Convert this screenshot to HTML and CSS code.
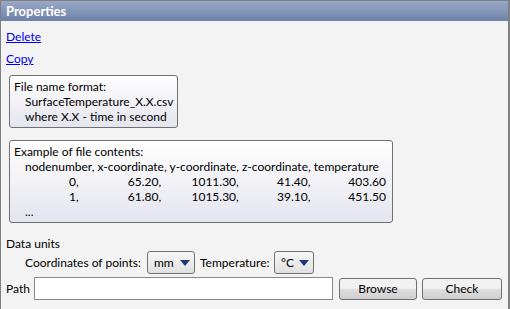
FILE: index.html
```html
<!DOCTYPE html>
<html lang="en">
<head>
  <meta charset="UTF-8">
  <title>Properties</title>
  <link rel="stylesheet" href="styles.css">
</head>
<body>
  <div class="panel">
    <div class="panel-header">Properties</div>

    <div class="panel-body">
      <a class="action" href="#">Delete</a>
      <a class="action" href="#">Copy</a>

      <!-- File name hint -->
      <div class="note">
        File name format:
        <div class="indent">SurfaceTemperature_X.X.csv</div>
        <div class="indent">where X.X - time in second</div>
      </div>

      <!-- Sample file contents -->
      <div class="note note-wide">
        Example of file contents:
        <div class="indent">nodenumber, x-coordinate, y-coordinate, z-coordinate, temperature</div>
        <div class="sample-row">
          <span class="c1">0,</span><span class="c2">65.20,</span><span class="c3">1011.30,</span><span class="c4">41.40,</span><span class="c5">403.60</span>
        </div>
        <div class="sample-row">
          <span class="c1">1,</span><span class="c2">61.80,</span><span class="c3">1015.30,</span><span class="c4">39.10,</span><span class="c5">451.50</span>
        </div>
        <div class="indent">...</div>
      </div>

      <div class="section-title">Data units</div>
      <div class="units-row">
        <span class="coords-label">Coordinates of points:</span>
        <span class="select select-mm">mm <span class="arrow"></span></span>
        <span class="temp-label">Temperature:</span>
        <span class="select">&deg;C <span class="arrow"></span></span>
      </div>

      <div class="path-row">
        <span class="path-label">Path</span>
        <input type="text" class="path-input">
        <button class="btn">Browse</button>
        <button class="btn btn-check">Check</button>
      </div>
    </div>
  </div>
</body>
</html>
```

FILE: styles.css
```css
:root {
  --bg-panel: #f3f3f3;
  --frame: #7f7f7f;
  --text: #000000;
  --link: #0000ee;
  --ctrl-border: #707070;
}
body {
  margin: 0;
  font-family: Lato, "Open Sans", sans-serif;
  font-size: 12px;
  color: var(--text);
}
/* Panel frame */
.panel {
  width: 507px;
  height: 308px;
  border: 1px solid var(--frame);
  border-right-width: 2px;
  border-bottom: none;
  background: var(--bg-panel);
  overflow: hidden;
}
.panel-header {
  height: 20px;
  line-height: 20px;
  padding-left: 5px;
  color: #ffffff;
  font-size: 13px;
  font-weight: bold;
  background: linear-gradient(#9aa8c8, #6d82aa);
}
.panel-body {
  padding: 8px 0 0 5px;
  display: flex;
  flex-direction: column;
  align-items: flex-start;
}
.action {
  color: var(--link);
  line-height: 15px;
  margin-bottom: 7px;
}
/* Hint boxes */
.note {
  width: 157px;
  margin: 2px 0 0 3px;
  padding: 3px 6px 3px 4px;
  line-height: 15px;
  white-space: nowrap;
  border: 1px solid var(--ctrl-border);
  border-radius: 3px;
  background: linear-gradient(#ffffff, #e4e4ee);
}
.note-wide {
  margin-top: 12px;
  width: 372px;
}
.indent {
  padding-left: 11px;
}
.sample-row {
  display: flex;
}
.sample-row span {
  text-align: right;
}
.c1 { width: 65px; }
.c2 { width: 83px; }
.c3 { width: 78px; }
.c4 { width: 72px; }
.c5 { width: 76px; }
/* Units */
.section-title {
  margin-top: 13px;
  line-height: 15px;
}
.units-row {
  display: flex;
  align-items: center;
  margin-left: 19px;
}
.coords-label {
  width: 122px;
}
.temp-label {
  width: 74px;
  margin-left: 5px;
}
.select {
  display: inline-flex;
  align-items: center;
  justify-content: space-between;
  box-sizing: border-box;
  width: 40px;
  height: 23px;
  padding: 0 4px 0 6px;
  border: 1px solid var(--ctrl-border);
  border-radius: 3px;
  background: linear-gradient(#f7f7f7, #e0e0e0);
}
.select-mm {
  width: 48px;
}
.arrow {
  width: 0;
  height: 0;
  border-left: 5px solid transparent;
  border-right: 5px solid transparent;
  border-top: 6px solid #1d3a78;
}
/* Path row */
.path-row {
  display: flex;
  align-items: center;
  margin-top: 3px;
}
.path-label {
  width: 28px;
}
.path-input {
  box-sizing: border-box;
  width: 299px;
  height: 23px;
  margin: 0 6px 0 0;
  padding: 0;
  border: 1px solid #8a8a8a;
  background: #ffffff;
}
.btn {
  width: 78px;
  height: 22px;
  margin-right: 5px;
  font-family: inherit;
  font-size: 12px;
  border: 1px solid var(--ctrl-border);
  border-radius: 3px;
  background: linear-gradient(#f2f2f2 45%, #dcdcdc 55%, #cfcfcf);
  color: var(--text);
}
.btn-check {
  width: 80px;
}
```
